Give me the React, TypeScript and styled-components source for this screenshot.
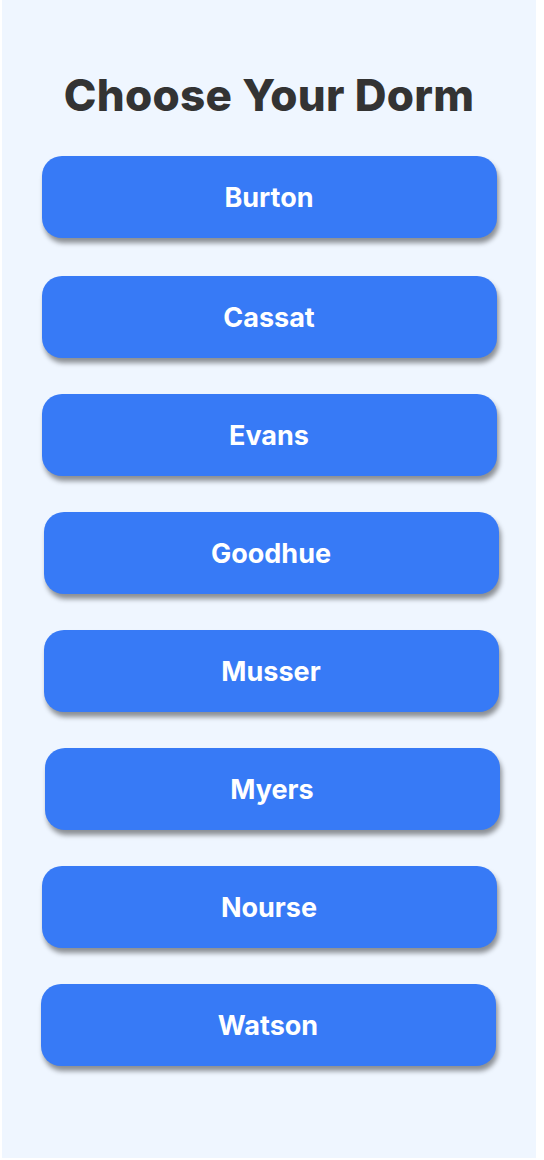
import React from "react";
import styled, { createGlobalStyle } from "styled-components";

const GlobalStyle = createGlobalStyle`
  html, body {
    margin: 0;
    padding: 0;
    background: #ffffff;
  }
  #root {
    min-height: 1160px;
  }
`;

const Page = styled.div`
  box-sizing: border-box;
  margin: 0 8px 0 2px;
  min-height: 1158px;
  background: #eff6ff;
  display: flex;
  flex-direction: column;
  align-items: center;
  padding-top: 67px;
  font-family: Inter, "Liberation Sans", sans-serif;
`;

const Title = styled.h1`
  margin: 0 0 32px;
  font-family: Inter, "Liberation Sans", sans-serif;
  font-weight: 800;
  font-size: 44px;
  line-height: 57px;
  color: #333333;
  letter-spacing: 0.3px;
`;

const List = styled.div`
  display: flex;
  flex-direction: column;
  gap: 36px;
  width: 455px;
`;

const DormButton = styled.button<{ $dx: number; $dy: number }>`
  box-sizing: border-box;
  height: 82px;
  width: 455px;
  margin-left: ${(p) => p.$dx}px;
  margin-top: ${(p) => p.$dy}px;
  border: none;
  border-radius: 20px;
  background: #377af6;
  color: #ffffff;
  font-family: Inter, "Liberation Sans", sans-serif;
  font-weight: 700;
  font-size: 27px;
  box-shadow: 2px 5px 5px rgba(0, 0, 0, 0.42);
  cursor: pointer;
  display: flex;
  align-items: center;
  justify-content: center;
`;

const dorms: [string, number, number][] = [
  ["Burton", 0, 0],
  ["Cassat", 0, 2],
  ["Evans", 0, 0],
  ["Goodhue", 2, 0],
  ["Musser", 2, 0],
  ["Myers", 3, 0],
  ["Nourse", 0, 0],
  ["Watson", -1, 0],
];

export default function App() {
  return (
    <>
      <GlobalStyle />
      <Page>
        <Title>Choose Your Dorm</Title>
        <List>
          {dorms.map(([name, dx, dy]) => (
            <DormButton key={name} $dx={dx} $dy={dy}>
              {name}
            </DormButton>
          ))}
        </List>
      </Page>
    </>
  );
}
